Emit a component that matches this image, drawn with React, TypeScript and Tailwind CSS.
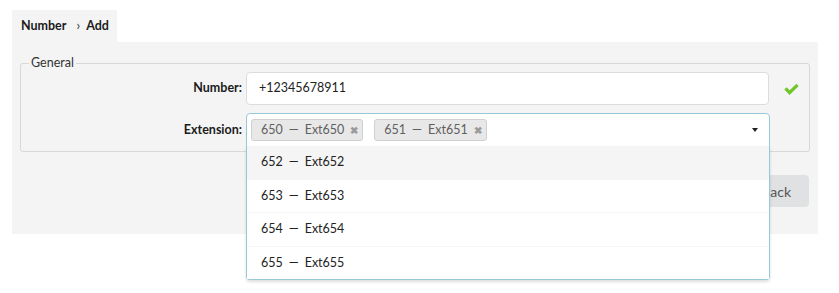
import { useState } from 'react';

const selected = [
  { id: '650', name: 'Ext650' },
  { id: '651', name: 'Ext651' },
];

const options = [
  { id: '652', name: 'Ext652' },
  { id: '653', name: 'Ext653' },
  { id: '654', name: 'Ext654' },
  { id: '655', name: 'Ext655' },
];

function CheckIcon() {
  return (
    <svg width={15} height={11} viewBox="0 0 15 11" fill="#72c52a">
      <path d="M0.3 5.6 L2.6 3.3 L5.6 6.3 L12.4 -0.2 L14.7 2.1 L5.6 11 Z" />
    </svg>
  );
}

function ExtLabel({ id, name }: { id: string; name: string }) {
  return (
    <span className="whitespace-nowrap">
      {id}
      <span className="mx-[6px]">—</span>
      {name}
    </span>
  );
}

function Tag({ id, name }: { id: string; name: string }) {
  return (
    <span className="inline-flex h-[22px] items-center rounded-[3px] border border-[#d0d0d0] bg-[#e8e8e8] pl-[9px] pr-[4px] text-[12.5px] text-[#5f5f5f]">
      <ExtLabel id={id} name={name} />
      <span className="ml-[6px] inline-flex w-[8px] justify-center overflow-visible text-[10px] font-bold text-[#9a9a9a]">
        ✖
      </span>
    </span>
  );
}

export default function App() {
  const [hovered, setHovered] = useState('652');

  return (
    <div className="h-[293px] w-[839px] bg-white pl-[12px] pt-[10px] font-['Lato',sans-serif] text-[#222]">
      <div className="w-[806px]">
        {/* Breadcrumb tab */}
        <div className="inline-flex h-[32px] items-center bg-[#f4f4f4] pl-[9px] pr-[8px] text-[12.5px] font-bold text-[#1b1b1b]">
          <span>Number</span>
          <span className="ml-[10px] mr-[6px] text-[13px] font-normal text-[#333]">›</span>
          <span>Add</span>
        </div>

        {/* Panel */}
        <div className="bg-[#f4f4f4] px-[8px] pb-[27px] pt-[13px]">
          <fieldset className="rounded-[3px] border border-[#d8d8d8] px-0 pb-[4px]">
            <legend className="ml-[8px] px-[2px] text-[12.5px] leading-[16px] text-[#333]">General</legend>

            <div className="flex items-center pt-[1px]">
              <label className="w-[221px] text-right text-[12.5px] font-bold text-[#1b1b1b]">Number:</label>
              <div className="ml-[4px] flex h-[33px] w-[523px] items-center rounded-[4px] border border-[#dcdcdc] bg-white pl-[12px] text-[12.5px] text-[#222]">
                +12345678911
              </div>
              <div className="flex pl-[15px] pt-[1px]">
                <CheckIcon />
              </div>
            </div>

            <div className="mt-[8px] flex items-center">
              <label className="w-[221px] text-right text-[12.5px] font-bold text-[#1b1b1b]">Extension:</label>
              <div className="relative ml-[4px] flex h-[34px] w-[524px] items-center gap-[11px] rounded-t-[4px] border border-[#96c8da] bg-white pl-[4px]">
                {selected.map((s) => (
                  <Tag key={s.id} id={s.id} name={s.name} />
                ))}
                <span className="absolute right-[11px] top-[14px] h-0 w-0 border-x-[3.5px] border-t-[4px] border-x-transparent border-t-[#222]" />

                {/* Open menu */}
                <ul className="absolute left-[-1px] right-[-1px] top-full z-10 rounded-b-[4px] border-x border-b border-[#96c8da] bg-white shadow-[0_2px_3px_0_rgba(34,36,38,0.15)]">
                  {options.map((o, i) => (
                    <li
                      key={o.id}
                      onMouseEnter={() => setHovered(o.id)}
                      className={`flex h-[33px] items-center pl-[14px] text-[12.5px] text-[#222] ${
                        i > 0 ? 'border-t border-[#f6f6f6]' : ''
                      } ${hovered === o.id ? 'bg-[#f5f5f5]' : 'bg-white'} ${i === 2 ? 'h-[34px]' : ''}`}
                    >
                      <ExtLabel id={o.id} name={o.name} />
                    </li>
                  ))}
                </ul>
              </div>
            </div>
          </fieldset>

          <div className="mt-[23px] flex justify-end pr-[1px]">
            <button className="h-[32px] rounded-[4px] bg-[#e0e1e2] pl-[20px] pr-[18px] text-[14px] text-[#555]">
              Back
            </button>
          </div>
        </div>
      </div>
    </div>
  );
}
